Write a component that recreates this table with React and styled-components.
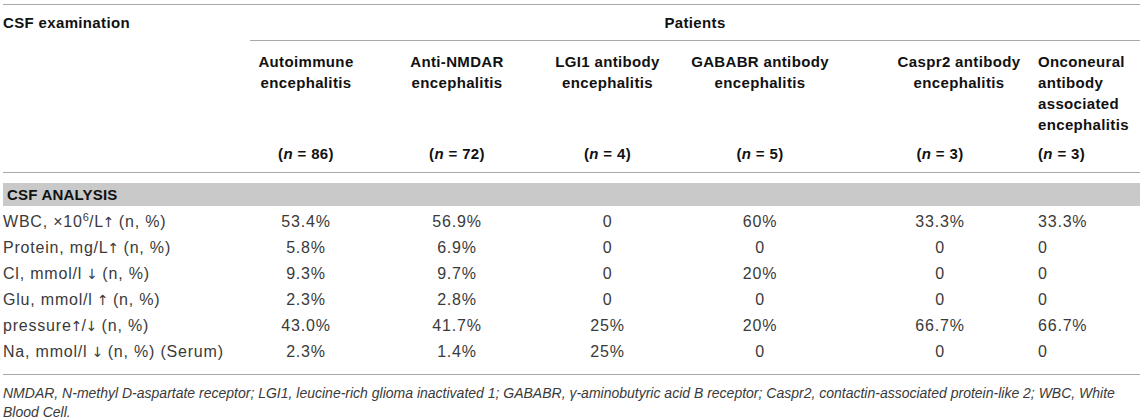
import React from "react";
import styled, { createGlobalStyle } from "styled-components";

const Global = createGlobalStyle`
  html, body { margin: 0; padding: 0; background: #fff; }
  body { font-family: "Liberation Sans", Arial, Helvetica, sans-serif; }
`;

const Page = styled.div`
  padding: 4px 5px 0 3px;
  width: 1137px;
`;

const TableWrap = styled.div`
  border-top: 1px solid #a9a9a9;
  border-bottom: 1px solid #a9a9a9;
  padding-bottom: 9px;
`;

const Table = styled.table`
  width: 1137px;
  border-collapse: collapse;
  table-layout: fixed;
`;

const Head = styled.th`
  font-weight: 700;
  font-size: 15px;
  letter-spacing: 0.35px;
  line-height: 21px;
  color: #111;
  vertical-align: top;
  text-align: ${(p) => p.$align || "center"};
  padding: ${(p) => p.$pt ?? 0}px ${(p) => p.$pr ?? 0}px ${(p) => p.$pb ?? 0}px
    ${(p) => p.$pl ?? 0}px;
  border-bottom: ${(p) => (p.$rule ? "1px solid #a9a9a9" : "none")};
`;

const NItalic = styled.i`
  font-style: italic;
`;

const SectionCell = styled.td`
  padding: 10px 0 3px 0;
`;

const SectionBar = styled.div`
  background: #c9c9c9;
  height: 23px;
  line-height: 23px;
  padding-left: 4px;
  font-weight: 700;
  font-size: 15px;
  letter-spacing: 0.2px;
  color: #111;
`;

const Cell = styled.td`
  font-size: 16px;
  letter-spacing: 0.8px;
  line-height: 26px;
  height: 26px;
  color: #3a3a3a;
  padding: 0 ${(p) => p.$pr ?? 0}px 0 ${(p) => p.$pl ?? 0}px;
  text-align: ${(p) => p.$align || "center"};
  white-space: nowrap;
`;

const Sup = styled.sup`
  font-size: 11px;
  line-height: 0;
  letter-spacing: 0;
`;

const Arrow = styled.span`
  font-family: "DejaVu Sans", sans-serif;
  font-size: 14px;
  letter-spacing: 0;
  margin: 0 -1px;
`;

const Footnote = styled.p`
  margin: 9px 0 0 0;
  font-style: italic;
  font-size: 14px;
  line-height: 19px;
  color: #3a3a3a;
  width: 1137px;
`;

const cols = [
  { w: 247, align: "left" },
  { w: 112 },
  { w: 190, headPl: 20, headPr: 20 },
  { w: 111 },
  { w: 194 },
  { w: 173, pr: 7, headPl: 31, headPr: 0 },
  { w: 110, align: "left", pl: 8 },
];

const groups = [
  { title: "Autoimmune encephalitis", n: 86 },
  { title: "Anti-NMDAR encephalitis", n: 72 },
  { title: "LGI1 antibody encephalitis", n: 4 },
  { title: "GABABR antibody encephalitis", n: 5 },
  { title: "Caspr2 antibody encephalitis", n: 3 },
  { title: "Onconeural antibody associated encephalitis", n: 3 },
];

const up = <Arrow>↑</Arrow>;
const down = <Arrow>↓</Arrow>;

const rows = [
  {
    label: (
      <>
        WBC, ×10<Sup>6</Sup>/L{up} (n, %)
      </>
    ),
    v: ["53.4%", "56.9%", "0", "60%", "33.3%", "33.3%"],
  },
  { label: <>Protein, mg/L{up} (n, %)</>, v: ["5.8%", "6.9%", "0", "0", "0", "0"] },
  { label: <>Cl, mmol/l {down} (n, %)</>, v: ["9.3%", "9.7%", "0", "20%", "0", "0"] },
  { label: <>Glu, mmol/l {up} (n, %)</>, v: ["2.3%", "2.8%", "0", "0", "0", "0"] },
  {
    label: <>pressure{up}/{down} (n, %)</>,
    v: ["43.0%", "41.7%", "25%", "20%", "66.7%", "66.7%"],
  },
  {
    label: <>Na, mmol/l {down} (n, %) (Serum)</>,
    v: ["2.3%", "1.4%", "25%", "0", "0", "0"],
  },
];

export default function App() {
  return (
    <>
      <Global />
      <Page>
        <TableWrap>
          <Table>
            <colgroup>
              {cols.map((c, i) => (
                <col key={i} style={{ width: c.w }} />
              ))}
            </colgroup>
            <thead>
              <tr>
                <Head $align="left" $pt={7} $pb={7}>
                  CSF examination
                </Head>
                <Head colSpan={6} $pt={7} $pb={7} $rule>
                  Patients
                </Head>
              </tr>
              <tr>
                <Head />
                {groups.map((g, i) => {
                  const c = cols[i + 1];
                  return (
                    <Head
                      key={i}
                      $align={c.align}
                      $pl={c.headPl ?? c.pl}
                      $pr={c.headPr ?? c.pr}
                      $pt={10}
                      $pb={4}
                    >
                      {g.title}
                    </Head>
                  );
                })}
              </tr>
              <tr>
                <Head $pt={4} $pb={8} $rule />
                {groups.map((g, i) => {
                  const c = cols[i + 1];
                  return (
                    <Head
                      key={i}
                      $align={c.align}
                      $pl={c.pl}
                      $pr={c.pr}
                      $pt={4}
                      $pb={8}
                      $rule
                    >
                      (<NItalic>n</NItalic> = {g.n})
                    </Head>
                  );
                })}
              </tr>
            </thead>
            <tbody>
              <tr>
                <SectionCell colSpan={7}>
                  <SectionBar>CSF ANALYSIS</SectionBar>
                </SectionCell>
              </tr>
              {rows.map((r, ri) => (
                <tr key={ri}>
                  <Cell $align="left">{r.label}</Cell>
                  {r.v.map((v, i) => {
                    const c = cols[i + 1];
                    return (
                      <Cell key={i} $align={c.align} $pl={c.pl} $pr={c.pr}>
                        {v}
                      </Cell>
                    );
                  })}
                </tr>
              ))}
            </tbody>
          </Table>
        </TableWrap>
        <Footnote>
          NMDAR, N-methyl D-aspartate receptor; LGI1, leucine-rich glioma inactivated 1; GABABR,
          γ-aminobutyric acid B receptor; Caspr2, contactin-associated protein-like 2; WBC, White
          Blood Cell.
        </Footnote>
      </Page>
    </>
  );
}
